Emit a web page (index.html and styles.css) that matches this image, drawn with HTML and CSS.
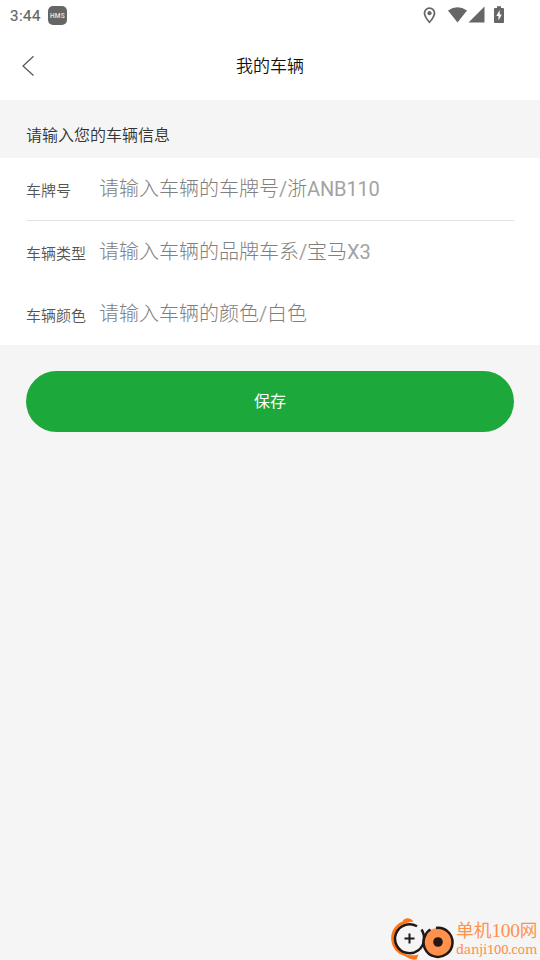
FILE: index.html
```
<!DOCTYPE html>
<html lang="zh-CN">
<head>
<meta charset="utf-8">
<title>我的车辆</title>
<link rel="stylesheet" href="styles.css">
</head>
<body>
<div class="status">
  <span class="time">3:44</span>
  <span class="hms">HMS</span>
  <svg class="sys" width="84" height="20" viewBox="0 0 84 20" fill="#666">
    <path fill-rule="evenodd" d="M9.500 2.300A5.900 5.900 0 0 0 3.600 8.200C3.600 12.200 9.500 18.500 9.500 18.500S15.400 12.200 15.400 8.200A5.900 5.900 0 0 0 9.500 2.300ZM9.500 4A4.100 4.100 0 0 1 13.600 8.200C13.600 10.400 11.600 13.600 9.500 16C7.400 13.600 5.400 10.400 5.400 8.200A4.100 4.100 0 0 1 9.500 4Z"/>
    <circle cx="9.500" cy="8.200" r="2.100"/>
    <path d="M28 5.400Q37.500 -1 47 5.400L37.500 17.500Z"/>
    <path d="M64.500 1.500V17.500H48.500Z"/>
    <path fill-rule="evenodd" d="M77 1.300H81V3H83Q84 3 84 4V17Q84 18 83 18H75Q74 18 74 17V4Q74 3 75 3H77ZM79.700 5L76.300 11H78.500V15.500L81.800 9.500H79.700Z"/>
  </svg>
</div>
<header class="nav">
  <svg class="back" width="14" height="22" viewBox="0 0 14 22" fill="none" stroke="#555" stroke-width="1.200"><path d="M12.500 1.300L2 11L12.500 20.500"/></svg>
  <h1>我的车辆</h1>
</header>
<main>
  <h2>请输入您的车辆信息</h2>
  <section class="form">
    <div class="row lined"><span class="label">车牌号</span><span class="hint">请输入车辆的车牌号<span class="latin">/</span>浙<span class="latin">ANB110</span></span></div>
    <div class="row"><span class="label">车辆类型</span><span class="hint">请输入车辆的品牌车系<span class="latin">/</span>宝马<span class="latin">X3</span></span></div>
    <div class="row"><span class="label">车辆颜色</span><span class="hint">请输入车辆的颜色<span class="latin">/</span>白色</span></div>
  </section>
  <button class="save">保存</button>
</main>
<div class="mark">
  <svg width="66" height="44" viewBox="0 0 66 44" fill="none">
    <path d="M23.500 5.500C20 1 14.500 1.500 12.500 5.500C-3 12 -2 33 12 39C17 40.500 20 44.500 26.500 43.500L28.500 38.500C24 40 18 39.500 14 37.500C2 31 1 15 12.500 8.500C15.500 7 19 6 23.500 5.500Z" fill="#ff7415"/>
    <path d="M27 10.300A14.500 14.500 0 1 0 34 24Q34.500 18 31.500 13.500" stroke="#231815" stroke-width="2.500"/>
    <path d="M19.500 17.500V27.500M14.500 22.500H24.500" stroke="#231815" stroke-width="2"/>
    <circle cx="48" cy="26" r="14" fill="#ff914d"/>
    <path d="M46 12A14.500 14.500 0 1 1 35 20Q36.500 15.500 40.500 13.500" stroke="#231815" stroke-width="2.500"/>
    <circle cx="48" cy="26" r="4.800" fill="#231815"/>
  </svg>
  <div class="words"><span class="cn">单机<span class="num">100</span>网</span><span class="url">danji100.com</span></div>
</div>
</body>
</html>
```
FILE: styles.css
```
* { box-sizing: border-box; }
body {
  margin: 0;
  height: 960px;
  overflow: hidden;
  background: #f5f5f5;
  font-family: Roboto, "Noto Sans CJK SC", sans-serif;
  display: flex;
  flex-direction: column;
}
.status {
  height: 31px;
  background: #fff;
  display: flex;
  align-items: center;
  padding: 0 36px 0 10px;
  color: #666;
}
.time { font-size: 15px; letter-spacing: 0.5px; width: 38px; -webkit-text-stroke: 0.2px #666; }
.hms {
  width: 19px;
  height: 19px;
  border-radius: 5px;
  background: #666;
  color: #ddd;
  font-size: 6.5px;
  font-weight: 700;
  letter-spacing: 0.2px;
  line-height: 21px;
  text-align: center;
}
.sys { margin-left: auto; margin-bottom: 2px; }
.nav {
  height: 69px;
  background: #fff;
  display: grid;
  grid-template-columns: 60px 1fr 60px;
  align-items: center;
}
.back { margin-left: 21px; }
h1 {
  margin: 0;
  padding-bottom: 2px;
  font-size: 17px;
  font-weight: 350;
  color: #111;
  text-align: center;
}
main { flex: 1; display: flex; flex-direction: column; }
h2 {
  margin: 0;
  height: 58px;
  padding: 13px 26px 0;
  font-size: 16px;
  line-height: 46px;
  font-weight: 350;
  color: #333;
}
.form { background: #fff; height: 187px; padding: 0 26px; }
.row { height: 62px; display: flex; align-items: center; }
.lined { height: 63px; border-bottom: 1px solid #e2e2e2; }
.label { width: 73px; font-size: 15px; font-weight: 350; color: #555; padding-top: 1px; }
.hint { font-size: 20px; font-weight: 300; color: #808080; padding-bottom: 4px; }
.latin { font-weight: 400; color: #a3a3a3; letter-spacing: -0.15px; }
.save {
  margin: 26px 26px 0;
  height: 61px;
  border: 0;
  padding: 0 0 3px;
  border-radius: 31px;
  background: #1ca83a;
  color: #fff;
  font: 16px Roboto, "Noto Sans CJK SC", sans-serif;
}
.mark { height: 44px; margin-left: 390px; display: flex; }
.mark svg { flex: none; }
.words { display: flex; flex-direction: column; color: #ff914d; white-space: nowrap; }
.cn { font: 17.700px/25px "Noto Sans CJK SC", sans-serif; padding-top: 1px; }
.num { font: 19.500px/20px "Liberation Serif", serif; letter-spacing: -0.3px; }
.url { font: 13.200px/14px "Noto Serif", "Liberation Serif", serif; letter-spacing: -0.250px; }
```
